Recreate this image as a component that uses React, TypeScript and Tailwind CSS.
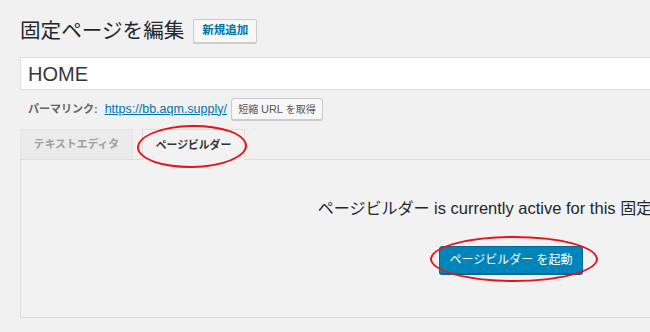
const FONT = "font-['Liberation_Sans','Noto_Sans_CJK_JP',sans-serif]";

export default function App() {
  return (
    <div className={`w-[650px] h-[332px] overflow-hidden bg-[#f1f1f1] ${FONT}`}>
      <div className="w-[1002px] pl-[20px]">
        {/* heading */}
        <div className="flex items-center gap-[9px] pt-[19px]">
          <h1 className="text-[20.6px] leading-[24px] text-[#23282d]">固定ページを編集</h1>
          <button
            type="button"
            className="h-[24px] w-[64px] rounded-[2px] border border-[#cccccc] bg-[#f7f7f7] text-[11.5px] font-bold text-[#0073aa] shadow-[0_1px_0_#cccccc]"
          >
            新規追加
          </button>
        </div>

        {/* title input */}
        <div className="mt-[14px] h-[33px] flex items-center bg-white border border-[#dddddd] px-[7px] text-[20px] text-[#32373c]">
          HOME
        </div>

        {/* permalink */}
        <div className="mt-[8px] flex items-center pl-[8px]">
          <span className="text-[11px] font-bold text-[#666666]">パーマリンク:</span>
          <a href="#" className="ml-[7px] text-[12.5px] text-[#0073aa] underline">
            https://bb.aqm.supply/
          </a>
          <button
            type="button"
            className="ml-[4px] h-[22px] w-[92px] rounded-[3px] border border-[#cccccc] bg-[#f7f7f7] text-[10px] text-[#555555] shadow-[0_1px_0_#cccccc]"
          >
            短縮 <span className="text-[11px]">URL</span> を取得
          </button>
        </div>

        {/* tabs */}
        <div className="mt-[9px] flex items-end gap-[9px]">
          <div className="w-[113px] h-[30px] flex items-center justify-center border border-b-0 border-[#e5e5e5] bg-[#ebebeb] text-[10.8px] font-bold text-[#a0a0a0]">
            テキストエディタ
          </div>
          <div className="relative w-[103px] h-[31px] -mb-px flex items-center justify-center border border-b-0 border-[#dddddd] bg-[#f2f2f2] text-[10.8px] font-bold text-[#333333]">
            ページビルダー
            <div className="absolute left-[-6px] right-[-3px] top-[-5px] bottom-[-8px] rounded-[50%] border-2 border-[#e8141c] -rotate-[1deg]" />
          </div>
        </div>

        {/* panel */}
        <div className="h-[159px] border border-[#dddddd] bg-[#f2f2f2] flex flex-col items-center pt-[36px]">
          <p className="text-[16px] leading-[24px] text-[#23282d] whitespace-nowrap">
            ページビルダー<span className="text-[16.5px]"> is currently active for this </span>固定ページ.
          </p>
          <div className="relative mt-[25px]">
            <button
              type="button"
              className="h-[28px] w-[144px] rounded-[3px] border border-[#006799] bg-[#0085ba] text-[12px] text-white shadow-[0_1px_0_#006799]"
            >
              ページビルダー を起動
            </button>
            <div className="absolute left-[-9px] right-[-15px] top-[-10px] bottom-[-8px] rounded-[50%] border-2 border-[#e8141c]" />
          </div>
        </div>
      </div>
    </div>
  );
}
